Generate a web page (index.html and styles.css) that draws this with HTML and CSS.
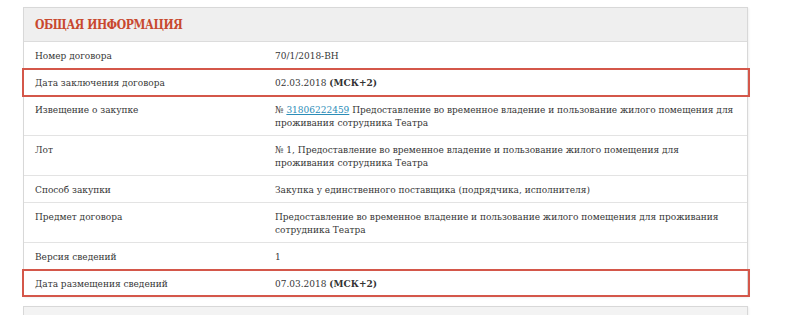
FILE: index.html
```html
<!DOCTYPE html>
<html lang="ru">
<head>
<meta charset="utf-8">
<title>Общая информация</title>
<link rel="stylesheet" href="styles.css">
</head>
<body>
<div class="page">
  <section class="panel">
    <header class="panel-head"><h2 class="panel-title">Общая информация</h2></header>
    <div class="row"><div class="label">Номер договора</div><div class="value">70/1/2018-ВН</div></div>
    <div class="row mark"><div class="label">Дата заключения договора</div><div class="value">02.03.2018 <b>(МСК+2)</b></div></div>
    <div class="row"><div class="label">Извещение о закупке</div><div class="value">№ <a href="#" class="link">31806222459</a> Предоставление во временное владение и пользование жилого помещения для<br>проживания сотрудника Театра</div></div>
    <div class="row"><div class="label">Лот</div><div class="value">№ 1, Предоставление во временное владение и пользование жилого помещения для<br>проживания сотрудника Театра</div></div>
    <div class="row"><div class="label">Способ закупки</div><div class="value">Закупка у единственного поставщика (подрядчика, исполнителя)</div></div>
    <div class="row"><div class="label">Предмет договора</div><div class="value">Предоставление во временное владение и пользование жилого помещения для проживания<br>сотрудника Театра</div></div>
    <div class="row"><div class="label">Версия сведений</div><div class="value">1</div></div>
    <div class="row mark last"><div class="label">Дата размещения сведений</div><div class="value">07.03.2018 <b>(МСК+2)</b></div></div>
  </section>
  <section class="panel panel-next"></section>
</div>
</body>
</html>
```
FILE: styles.css
```css
* { box-sizing: border-box; }
html, body { margin: 0; padding: 0; background: #fff; }
body {
  font-family: "DejaVu Serif", "Liberation Serif", serif;
  font-stretch: condensed;
  font-size: 10px;
  color: #363636;
  overflow: hidden;
  height: 315px;
}
.page { padding: 7px 0 0 23px; width: 748px; }
.panel {
  border: 1px solid #d8d8d8;
  background: #fff;
  box-shadow: 1px 1px 2px rgba(0,0,0,0.06);
}
.panel-head {
  background: #efefef;
  border-bottom: 1px solid #dcdcdc;
  height: 34px;
  display: flex;
  align-items: center;
  padding: 0 11px;
}
.panel-title {
  margin: 0;
  font-size: 12px;
  font-weight: bold;
  text-transform: uppercase;
  color: #c8482e;
  letter-spacing: -0.4px;
}
.row {
  display: grid;
  grid-template-columns: 251px 1fr;
  border-bottom: 1px solid #e3e3e3;
  line-height: 13px;
  padding: 7px 0 6px;
}
.row.last { border-bottom: none; }
.label { padding-left: 11px; }
.value { padding-right: 10px; white-space: nowrap; }
.value b { font-weight: bold; color: #333; }
.link { color: #2b8db8; text-decoration: underline; }
.mark {
  outline: 2px solid #d4574a;
  outline-offset: -1px;
  margin: 0 -2px 0 -1px;
  padding-left: 1px;
  padding-right: 2px;
  position: relative;
}
.panel-next {
  margin-top: 9px;
  height: 12px;
  background: #f3f3f3;
}
```
